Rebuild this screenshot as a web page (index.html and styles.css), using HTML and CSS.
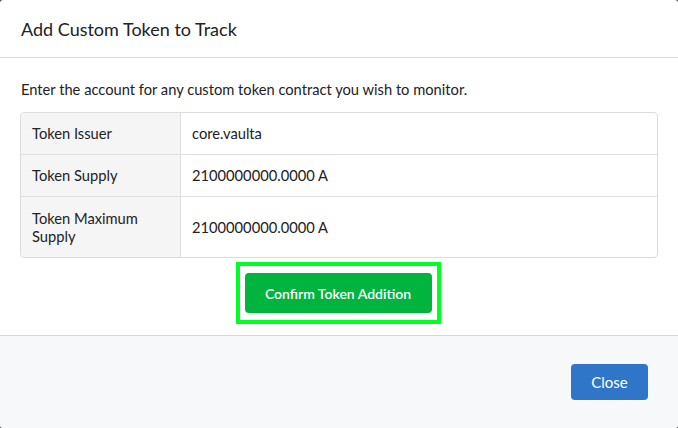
FILE: index.html
```html
<!DOCTYPE html>
<html>
<head>
<meta charset="utf-8">
<link rel="stylesheet" href="styles.css">
</head>
<body>
<div class="modal">
  <div class="modal-header">
    <h1 class="modal-title">Add Custom Token to Track</h1>
  </div>
  <div class="modal-body">
    <p class="intro">Enter the account for any custom token contract you wish to monitor.</p>
    <table class="info-table">
      <colgroup><col class="col-label"><col></colgroup>
      <tr class="row-short"><th>Token Issuer</th><td>core.vaulta</td></tr>
      <tr class="row-short"><th>Token Supply</th><td>2100000000.0000 A</td></tr>
      <tr><th>Token Maximum Supply</th><td>2100000000.0000 A</td></tr>
    </table>
    <div class="confirm-wrap">
      <div class="highlight">
        <button class="btn btn-confirm">Confirm Token Addition</button>
      </div>
    </div>
  </div>
  <div class="modal-footer">
    <button class="btn btn-close">Close</button>
  </div>
</div>
</body>
</html>
```

FILE: styles.css
```css
html, body {
  margin: 0;
  padding: 0;
  background: #3a3a3a;
}
body {
  width: 678px;
  height: 428px;
  overflow: hidden;
  font-family: Lato, "Open Sans", sans-serif;
  color: #222;
}
.modal {
  width: 678px;
  height: 428px;
  background: #fff;
  border-radius: 3px;
  overflow: hidden;
  display: flex;
  flex-direction: column;
}
.modal-header {
  height: 58px;
  box-sizing: border-box;
  display: flex;
  align-items: center;
  padding: 0 21px 0 21px;
  border-bottom: 1px solid #dcdcdc;
}
.modal-title {
  margin: 0;
  font-size: 18px;
  font-weight: 400;
  line-height: 24px;
  color: #222;
  padding-top: 1px;
}
.modal-body {
  padding: 22px 20px 11px 20px;
}
.intro {
  margin: 0 0 14px 0;
  font-size: 14.7px;
  line-height: 18px;
  padding-left: 1px;
}
.info-table {
  width: 100%;
  table-layout: fixed;
  border-collapse: separate;
  border-spacing: 0;
  border: 1px solid #dcdcdc;
  border-radius: 4px;
  font-size: 14.7px;
  line-height: 18px;
}
.col-label { width: 160px; }
.info-table th,
.info-table td {
  padding: 12px 11px 12px 11px;
  text-align: left;
  font-weight: 400;
  vertical-align: middle;
  border-bottom: 1px solid #dfdfdf;
}
.info-table tr:last-child th,
.info-table tr:last-child td {
  border-bottom: none;
}
.info-table th {
  background: #f5f5f5;
  border-right: 1px solid #dfdfdf;
}
.info-table tr:first-child th { border-top-left-radius: 3px; }
.info-table tr:last-child th { border-bottom-left-radius: 3px; }
.row-short th,
.row-short td {
  padding-top: 11px;
  padding-bottom: 12px;
}
.confirm-wrap {
  display: flex;
  justify-content: center;
  margin-top: 4px;
  padding-right: 2px;
}
.highlight {
  border: 4px solid #00ff22;
  padding: 7px 5px;
}
.btn {
  font-family: Lato, "Open Sans", sans-serif;
  border: none;
  color: #fff;
  border-radius: 4px;
  cursor: pointer;
}
.btn-confirm {
  display: block;
  width: 187px;
  height: 40px;
  background: #00b43e;
  font-size: 14px;
  font-weight: 600;
}
.modal-footer {
  flex: 1;
  background: #f7f8fa;
  border-top: 1px solid #d6d6d6;
  display: flex;
  justify-content: flex-end;
  align-items: flex-start;
  padding: 28px 30px 0 0;
}
.btn-close {
  width: 77px;
  height: 36px;
  background: #2f76c8;
  font-size: 15px;
  font-weight: 400;
}
```
